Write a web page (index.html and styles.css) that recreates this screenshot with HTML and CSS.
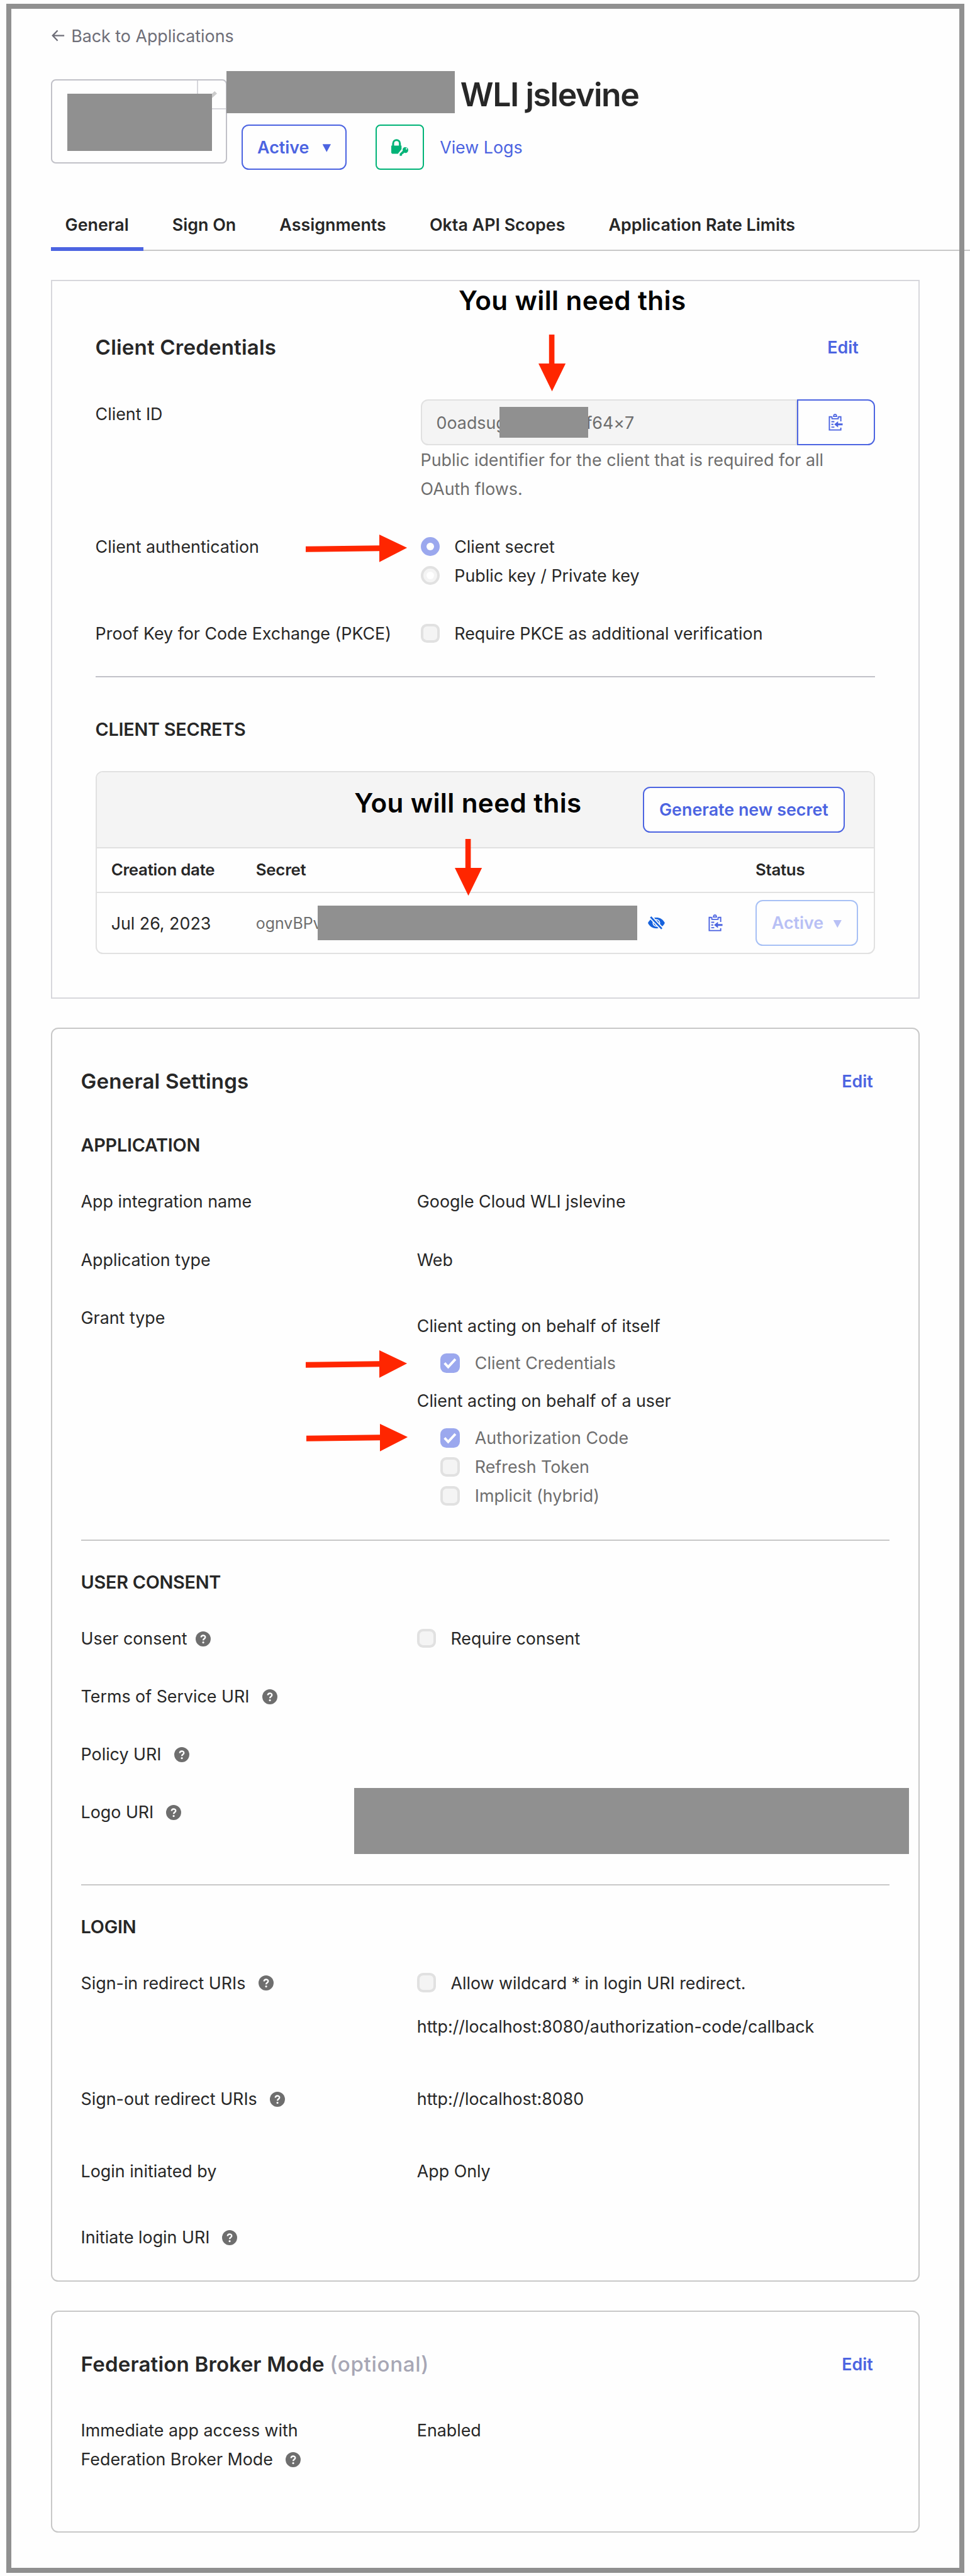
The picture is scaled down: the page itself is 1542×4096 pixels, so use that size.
FILE: index.html
```html
<!DOCTYPE html>
<html lang="en">
<head>
<meta charset="utf-8">
<title>WLI jslevine</title>
<link rel="stylesheet" href="styles.css">
</head>
<body>
<svg class="defs" aria-hidden="true">
  <symbol id="clipboard" viewBox="0 0 24 28">
    <path fill="none" stroke="currentColor" stroke-width="2" d="M5.500 5H1.500v21.800h19V23M16.500 5h4v7.500"/>
    <path fill="none" stroke="currentColor" stroke-width="1.800" d="M5.800 4.500v3.800h10.400V4.500M7.500 4.300h7M8.800 4V3.200a2.200 2.200 0 0 1 4.400 0V4"/>
    <path fill="none" stroke="currentColor" stroke-width="2" d="M4.800 13h5M4.800 17.500h3.400M4.800 22h5"/>
    <path fill="currentColor" d="M9.500 17.500l6.500-5.200v3.700h7.500v3h-7.500v3.700z"/>
  </symbol>
  <symbol id="help" viewBox="0 0 24 24">
    <circle cx="12" cy="12" r="12" fill="#6e6e6e"/>
    <path fill="none" stroke="#fff" stroke-width="2.400" d="M8.800 9.600c0-4.200 6.500-4.100 6.500-.4 0 2.400-3.200 2.300-3.200 5"/>
    <circle cx="12.100" cy="17.600" r="1.600" fill="#fff"/>
  </symbol>
  <symbol id="arrow-down" viewBox="0 0 45 94">
    <path fill="#ff2600" d="M17.500 0h9v48H45L22.500 94 0 48h17.500z"/>
  </symbol>
  <symbol id="arrow-right" viewBox="0 0 168 46">
    <path fill="#ff2600" d="M0 19.500l122-1.500V0l46 22-46 23.500V27.500L0 29z"/>
  </symbol>
  <symbol id="check" viewBox="0 0 32 32">
    <path fill="none" stroke="#fff" stroke-width="4" d="M7 16l6 6.500L25 9.500"/>
  </symbol>
</svg>

<main class="page">
  <a class="back"><svg class="back-arrow" viewBox="0 0 22 20"><path fill="none" stroke="currentColor" stroke-width="2.400" d="M21 10H2M10 1.500L1.800 10l8.200 8.500"/></svg>Back to Applications</a>

  <header class="app-header">
    <div class="logo">
      <span class="logo-edit"><svg viewBox="0 0 24 24"><path fill="#ccc" d="M2 18L19 2l4 4L6 21H2z"/></svg></span>
      <span class="logo-mask"></span>
    </div>
    <div class="app-info">
      <div class="title-row"><span class="title-mask"></span><h1>WLI jslevine</h1></div>
      <div class="actions">
        <button class="btn">Active<i class="caret"></i></button>
        <button class="btn-lock"><svg viewBox="0 0 28 28"><path fill="#00b377" fill-rule="evenodd" d="M1.500 11V7.500a7.200 7.200 0 0 1 14.400 0V11H17v6l-6 7.500H1.500L0 23V11zM4.700 11h8V7.500a4 4 0 0 0-8 0z"/><path fill="#00b377" fill-rule="evenodd" d="M18.800 17.500a4.700 4.700 0 1 1 4.500 5.600l-2.300-.3-1 1.700-2 .5v2l-1.300 1H14v-3.500l5-5zM24 16.400a1.200 1.200 0 1 0 2.400 0 1.200 1.200 0 0 0-2.400 0z"/></svg></button>
        <a class="logs">View Logs</a>
      </div>
    </div>
  </header>

  <nav class="tabs">
    <a class="tab tab-on">General</a><a class="tab">Sign On</a><a class="tab">Assignments</a><a class="tab">Okta API Scopes</a><a class="tab">Application Rate Limits</a>
  </nav>

  <section class="card card-credentials">
    <div class="note note-id"><span>You will need this</span><svg><use href="#arrow-down"/></svg></div>
    <div class="card-head"><h2>Client Credentials</h2><a class="edit">Edit</a></div>
    <div class="row">
      <div class="label">Client ID</div>
      <div class="value">
        <div class="id-group">
          <div class="id-input"><span>0oadsug</span><span class="id-end">f64×7</span><span class="id-mask"></span></div>
          <button class="copy"><svg class="clip"><use href="#clipboard"/></svg></button>
        </div>
        <p class="hint">Public identifier for the client that is required for all<br>OAuth flows.</p>
      </div>
    </div>
    <div class="row">
      <div class="label">Client authentication</div>
      <div class="value">
        <svg class="pointer pointer-auth"><use href="#arrow-right"/></svg>
        <div class="option"><span class="radio radio-on"></span>Client secret</div>
        <div class="option"><span class="radio"></span>Public key / Private key</div>
      </div>
    </div>
    <div class="row">
      <div class="label">Proof Key for Code Exchange (PKCE)</div>
      <div class="value"><div class="option"><span class="box"></span>Require PKCE as additional verification</div></div>
    </div>
    <hr>
    <h3>CLIENT SECRETS</h3>
    <div class="secrets">
      <div class="note note-secret"><span>You will need this</span><svg><use href="#arrow-down"/></svg></div>
      <div class="toolbar"><button class="btn">Generate new secret</button></div>
      <div class="grid grid-head"><span>Creation date</span><span>Secret</span><span></span><span></span><span>Status</span></div>
      <div class="grid grid-row">
        <span>Jul 26, 2023</span>
        <span class="secret">ognvBPv<i class="secret-mask"></i></span>
        <svg class="eye" viewBox="0 0 28 22"><path fill="#1662dd" d="M0 11C3 4.500 8.500 2 14 2s11 2.500 14 9c-3 6.500-8.500 9-14 9S3 17.500 0 11z"/><circle cx="14" cy="11" r="5.500" fill="none" stroke="#fefefe" stroke-width="1.600"/><path stroke="#fefefe" stroke-width="6.500" d="M2 -1.700l24 25.500"/><path stroke="#1662dd" stroke-width="2.800" d="M4.500 1l18.500 19.800"/></svg>
        <svg class="clip"><use href="#clipboard"/></svg>
        <button class="btn btn-off">Active<i class="caret"></i></button>
      </div>
    </div>
  </section>

  <section class="card card-settings">
    <div class="card-head"><h2>General Settings</h2><a class="edit">Edit</a></div>
    <h3>APPLICATION</h3>
    <div class="row"><div class="label">App integration name</div><div class="value">Google Cloud WLI jslevine</div></div>
    <div class="row"><div class="label">Application type</div><div class="value">Web</div></div>
    <div class="row">
      <div class="label">Grant type</div>
      <div class="value grants">
        <p>Client acting on behalf of itself</p>
        <div class="options">
          <svg class="pointer"><use href="#arrow-right"/></svg>
          <div class="option"><svg class="box box-on"><use href="#check"/></svg>Client Credentials</div>
        </div>
        <p>Client acting on behalf of a user</p>
        <div class="options">
          <svg class="pointer pointer-code"><use href="#arrow-right"/></svg>
          <div class="option"><svg class="box box-on"><use href="#check"/></svg>Authorization Code</div>
          <div class="option"><span class="box"></span>Refresh Token</div>
          <div class="option"><span class="box"></span>Implicit (hybrid)</div>
        </div>
      </div>
    </div>
    <hr>
    <h3>USER CONSENT</h3>
    <div class="row"><div class="label">User consent<svg class="help help-near"><use href="#help"/></svg></div><div class="value"><div class="option"><span class="box"></span>Require consent</div></div></div>
    <div class="row"><div class="label">Terms of Service URI<svg class="help"><use href="#help"/></svg></div></div>
    <div class="row"><div class="label">Policy URI<svg class="help"><use href="#help"/></svg></div></div>
    <div class="row row-logo"><div class="label">Logo URI<svg class="help"><use href="#help"/></svg></div><div class="uri-mask"></div></div>
    <hr>
    <h3 class="h-login">LOGIN</h3>
    <div class="row row-wide"><div class="label">Sign-in redirect URIs<svg class="help"><use href="#help"/></svg></div>
      <div class="value"><div class="option"><span class="box"></span>Allow wildcard * in login URI redirect.</div><p class="uri">http://localhost:8080/authorization-code/callback</p></div></div>
    <div class="row row-wide"><div class="label">Sign-out redirect URIs<svg class="help"><use href="#help"/></svg></div><div class="value">http://localhost:8080</div></div>
    <div class="row row-login"><div class="label">Login initiated by</div><div class="value">App Only</div></div>
    <div class="row"><div class="label">Initiate login URI<svg class="help"><use href="#help"/></svg></div></div>
  </section>

  <section class="card card-broker">
    <div class="card-head"><h2>Federation Broker Mode <small>(optional)</small></h2><a class="edit">Edit</a></div>
    <div class="row"><div class="label">Immediate app access with<br>Federation Broker Mode<svg class="help"><use href="#help"/></svg></div><div class="value">Enabled</div></div>
  </section>

  <div class="frame"></div>
</main>
</body>
</html>
```
FILE: styles.css
```css
* { box-sizing: border-box; }
html, body { margin: 0; background: #fefefe; }
body { overflow: hidden; }
.defs { position: absolute; width: 0; height: 0; }
h1, h2, h3, p { margin: 0; font-weight: 500; }

.page {
  --line: 2.1px;
  --blue: #4c64e1;
  zoom: 0.9591;
  position: relative;
  width: 1608px;
  height: 4270px;
  padding: 35px 0 0 84px;
  overflow: hidden;
  font: 400 28px/48px Inter, sans-serif;
  letter-spacing: -0.020px;
  color: #272727;
}
.frame {
  position: absolute;
  left: 10px; top: 6px;
  width: 1588px; height: 4259px;
  border: 9px solid #909090;
  pointer-events: none;
}
svg { display: block; overflow: visible; }
button { font: inherit; padding: 0; margin: 0; background: #fefefe; cursor: pointer; }

.back { display: flex; align-items: center; color: #6e6e78; width: max-content; }
.back-arrow { width: 22px; height: 20px; margin: 0 10px 0 2px; }

.app-header { display: flex; margin-top: 35px; }
.logo {
  position: relative;
  width: 292px; height: 140px;
  margin: 13px -1px 0 0;
  border: var(--line) solid #c1c1c8;
  border-radius: 8px;
}
.logo-edit {
  position: absolute; right: 0; top: 0;
  width: 48px; height: 48px;
  border-left: var(--line) solid #d7d7dc;
  border-bottom: var(--line) solid #d7d7dc;
}
.logo-edit svg { width: 24px; height: 24px; margin: 16px 0 0 9px; }
.logo-mask { position: absolute; left: 25px; top: 22px; width: 240px; height: 95px; background: #909090; }
.title-row { display: flex; height: 70px; }
.title-mask { position: relative; width: 379px; height: 70px; background: #909090; }
h1 { margin-left: 9px; font-size: 54px; font-weight: 600; line-height: 78px; letter-spacing: -1.500px; white-space: nowrap; }
.actions { display: flex; margin: 18px 0 0 25px; }
.btn {
  display: flex; align-items: center; justify-content: center;
  height: 76px;
  border: var(--line) solid var(--blue);
  border-radius: 12px;
  color: var(--blue);
  font-weight: 600;
  white-space: nowrap;
}
.actions .btn { width: 175px; }
.caret {
  width: 14px; height: 13px; margin: 3px 0 0 22px;
  background: currentColor;
  clip-path: polygon(0 0, 100% 0, 50% 100%);
}
.btn-lock { width: 80px; height: 76px; margin: 0 26px 0 48px; border: var(--line) solid #00b377; border-radius: 8px; }
.btn-lock svg { width: 28px; height: 28px; margin: 0 auto; }
.logs { line-height: 76px; color: var(--blue); }

.tabs { display: flex; gap: 24px; margin-top: 66px; box-shadow: inset 0 -2px #c8c8c8; }
.tab { height: 68px; padding: 0 24px; font-weight: 600; letter-spacing: 0; white-space: nowrap; }
.tab-on { border-bottom: 6.300px solid var(--blue); }

.card {
  width: 1440px;
  margin-top: 48px;
  border: var(--line) solid #c8c8c8;
  border-radius: 12px;
  padding: 62px 48px 0;
}
.card-credentials { position: relative; height: 1192px; padding: 86px 72px 0; border-color: #d7d7dc; border-radius: 0; }
.card-settings { height: 2079px; }
.card-broker { height: 368px; }
.card-head { display: flex; justify-content: space-between; margin-bottom: 62px; }
.card-settings .card-head { margin-bottom: 59px; }
.edit { margin-right: 27px; color: var(--blue); font-weight: 600; }
h2 { font-size: 34.500px; font-weight: 600; letter-spacing: 0.180px; }
h2 small { font-size: 34.500px; font-weight: 500; letter-spacing: 0.700px; color: #a7a7b5; }
h3 { margin-bottom: 45px; font-size: 30px; font-weight: 600; letter-spacing: -0.250px; }
.h-login { margin-bottom: 44px; }
hr { height: 2.100px; margin: 0 0 45px; border: 0; background: #c8c8c8; }
.card-credentials hr { margin: -1px 0 62px; background: #c1c1c8; }

.row { display: flex; margin-bottom: 48px; }
.row-logo { position: relative; height: 96px; }
.row-wide { margin-bottom: 72px; }
.row-login { margin-bottom: 62px; }
.label { flex: none; width: 557px; }
.card-credentials .label { width: 539px; }
.value { position: relative; flex: 1; }
.help { display: inline-block; width: 25px; height: 25px; margin-left: 21px; vertical-align: -3px; }
.help-near { margin-left: 14px; }
.uri { margin-top: 24px; font-weight: 400; }
.uri-mask { position: absolute; left: 453px; top: -16px; width: 920px; height: 110px; background: #909090; }

.id-group { display: flex; height: 76px; }
.id-input {
  position: relative;
  width: 624px;
  padding-left: 24px;
  border: var(--line) solid #e1e1e1;
  border-radius: 12px 0 0 12px;
  background: #f4f4f4;
  line-height: 73px;
  color: #6e6e6e;
}
.id-end { position: absolute; left: 272px; }
.id-mask { position: absolute; left: 129px; top: 11px; width: 147px; height: 51px; background: #909090; }
.copy { width: 129px; border: var(--line) solid var(--blue); border-radius: 0 12px 12px 0; color: var(--blue); }
.clip { width: 24px; height: 28px; color: var(--blue); }
.copy .clip { margin: 0 auto; }
.hint { font-weight: 400; letter-spacing: 0; color: #6e6e6e; }

.option { display: flex; align-items: center; height: 48px; }
.radio, .box {
  flex: none;
  width: 32px; height: 32px;
  margin-right: 24px;
  border: 4.200px solid #e1e1e1;
  background: #f4f4f4;
}
.radio { display: flex; border-radius: 50%; }
.radio::after { content: ""; width: 13px; height: 13px; margin: auto; border-radius: 50%; background: #fff; }
.radio-on { background: #9ba8ee; border-color: #9ba8ee; }
.box { border-radius: 10px; }
.box-on { border: 0; background: #9ba8ee; }
.grants { padding-top: 14px; }
.grants p { font-weight: 400; }
.options { position: relative; margin: 14px 0; padding-left: 39px; color: #6e6e6e; }
.options:last-child { margin-bottom: 0; }
.options .option .box { margin-right: 25px; }

.note {
  position: absolute;
  width: 390px;
  font-size: 44px; font-weight: 600; letter-spacing: 0.380px;
  color: #000;
  white-space: nowrap;
}
.note svg { position: absolute; width: 45px; height: 94px; }
.note-id { left: 674px; top: 8px; }
.note-id svg { left: 132px; top: 81px; }
.note-secret { left: 427px; top: 27px; }
.note-secret svg { left: 167px; top: 84px; }
.pointer { position: absolute; left: -184px; top: 3px; width: 168px; height: 46px; }
.pointer-auth { left: -190px; top: 4px; }
.pointer-code { left: -183px; top: 1px; }

.secrets { position: relative; height: 304px; border: var(--line) solid #e1e1e1; border-radius: 12px; }
.toolbar {
  display: flex; justify-content: flex-end; align-items: center;
  height: 126px;
  padding-right: 48px;
  border-bottom: var(--line) solid #e1e1e1;
  border-radius: 10px 10px 0 0;
  background: #f4f4f4;
}
.toolbar .btn { width: 334px; }
.grid { display: grid; grid-template-columns: 240px 650px 100px 78px 170px; padding-left: 24px; align-items: center; }
.grid-head { height: 74px; border-bottom: var(--line) solid #e1e1e1; font-size: 27px; font-weight: 600; letter-spacing: -0.300px; }
.grid-row { height: 100px; }
.secret { position: relative; font-size: 26px; color: #6e6e6e; }
.secret-mask { position: absolute; left: 102px; top: -5px; width: 530px; height: 58px; background: #909090; }
.eye { width: 28px; height: 22px; }
.btn-off { color: #b8c0f5; border-color: #a7c0f5; }
.btn-off .caret { margin-left: 16px; }
```
